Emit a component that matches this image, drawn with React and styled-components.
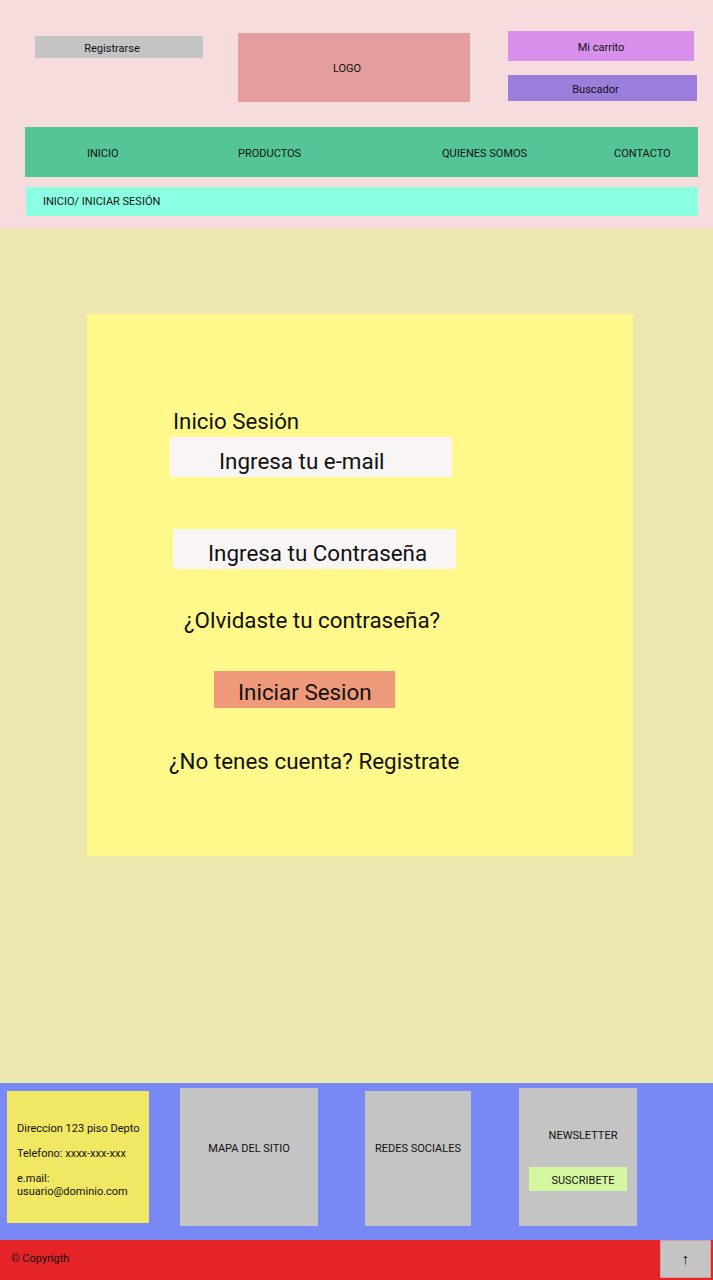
import React from "react";
import styled, { createGlobalStyle } from "styled-components";

const Global = createGlobalStyle`
  html, body { margin: 0; padding: 0; }
  body { font-family: Roboto, "Liberation Sans", sans-serif; color: #111; }
  * { box-sizing: border-box; }
`;

const Page = styled.div`
  width: 713px;
  display: flex;
  flex-direction: column;
`;

const Header = styled.header`
  background: #f7dcdd;
  padding: 31px 15px 13px 25px;
  display: flex;
  flex-direction: column;
`;

const TopRow = styled.div`
  display: flex;
  align-items: flex-start;
  height: 96px;
`;

const Block = styled.div`
  display: flex;
  align-items: center;
  justify-content: center;
  font-size: 11px;
  background: ${(p) => p.$bg};
  width: ${(p) => p.$w}px;
  height: ${(p) => p.$h}px;
  margin-left: ${(p) => p.$ml || 0}px;
  margin-top: ${(p) => p.$mt || 0}px;
  padding-right: ${(p) => p.$pr || 0}px;
  padding-top: 2px;
`;

const RightCol = styled.div`
  display: flex;
  flex-direction: column;
  margin-left: 38px;
  gap: 14px;
`;

const Nav = styled.nav`
  background: #53c597;
  width: 673px;
  height: 50px;
  display: grid;
  grid-template-columns: 151px 204px 172px 1fr;
  align-items: center;
  padding: 2px 0 0 62px;
  font-size: 11px;
`;

const Breadcrumb = styled.div`
  margin-top: 10px;
  margin-left: 1px;
  width: 672px;
  height: 29px;
  background: #8bffe2;
  display: flex;
  align-items: center;
  padding-left: 17px;
  font-size: 11px;
`;

const Main = styled.main`
  background: #ebe7ae;
  height: 854px;
  padding: 85px 0 0 87px;
`;

const Card = styled.section`
  width: 546px;
  height: 542px;
  background: #fef98a;
  display: flex;
  flex-direction: column;
  align-items: flex-start;
  padding-top: 94px;
`;

const Title = styled.h2`
  margin: 0 0 0 86px;
  font-size: 22.3px;
  font-weight: 400;
  line-height: 26px;
  height: 29px;
`;

const Input = styled.div`
  width: ${(p) => p.$w}px;
  height: 40px;
  margin-left: ${(p) => p.$ml}px;
  margin-top: ${(p) => p.$mt}px;
  background: #f9f5f5;
  display: flex;
  align-items: center;
  padding: 7px 0 0 ${(p) => p.$pl}px;
  font-size: 22.4px;
  white-space: nowrap;
`;

const TextLine = styled.p`
  margin: ${(p) => p.$mt}px 0 0 ${(p) => p.$ml}px;
  font-size: 22.4px;
  line-height: 26px;
  white-space: nowrap;
`;

const Button = styled.div`
  margin: ${(p) => p.$mt}px 0 0 127px;
  width: 181px;
  height: 37px;
  background: #ee9a7b;
  display: flex;
  align-items: center;
  padding: 4px 0 0 24px;
  font-size: 22.4px;
  white-space: nowrap;
`;

const Footer = styled.footer`
  background: #7889f6;
  height: 157px;
  display: flex;
  align-items: flex-start;
  padding-left: 7px;
`;

const Contact = styled.div`
  margin-top: 8px;
  width: 142px;
  height: 132px;
  background: #f0e862;
  padding: 31px 0 0 10px;
  font-size: 11px;
  line-height: 13px;
  display: flex;
  flex-direction: column;
  gap: 12px;
`;

const GrayBox = styled.div`
  background: #c4c4c4;
  width: ${(p) => p.$w}px;
  height: ${(p) => p.$h}px;
  margin-left: ${(p) => p.$ml}px;
  margin-top: ${(p) => p.$mt}px;
  padding-top: ${(p) => p.$pt}px;
  display: flex;
  flex-direction: column;
  align-items: center;
  font-size: 11px;
  line-height: 13px;
`;

const Subscribe = styled.div`
  margin-top: 25px;
  width: 98px;
  height: 24px;
  background: #d5f79f;
  display: flex;
  align-items: center;
  justify-content: center;
  padding: 2px 0 0 10px;
  font-size: 11px;
`;

const BottomBar = styled.div`
  background: #e52428;
  height: 40px;
  display: flex;
  align-items: flex-start;
  justify-content: space-between;
  padding-left: 11px;
  font-size: 11px;
`;

const Copy = styled.span`
  margin-top: 12px;
`;

const UpButton = styled.div`
  width: 51px;
  height: 38px;
  margin-right: 2px;
  background: #c4c4c4;
  border: 1px solid #c9a3a3;
  display: flex;
  align-items: center;
  justify-content: center;
  padding-bottom: 1px;
  font-size: 15px;
`;

export default function App() {
  return (
    <Page>
      <Global />
      <Header>
        <TopRow>
          <Block $bg="#c4c4c4" $w={168} $h={22} $ml={10} $mt={5} $pr={14}>Registrarse</Block>
          <Block $bg="#e39e9d" $w={232} $h={69} $ml={35} $mt={2} $pr={14}>LOGO</Block>
          <RightCol>
            <Block $bg="#d890ec" $w={186} $h={30}>Mi carrito</Block>
            <Block $bg="#9b7ddb" $w={189} $h={26} $pr={14}>Buscador</Block>
          </RightCol>
        </TopRow>
        <Nav>
          <span>INICIO</span>
          <span>PRODUCTOS</span>
          <span>QUIENES SOMOS</span>
          <span>CONTACTO</span>
        </Nav>
        <Breadcrumb>INICIO/ INICIAR SESIÓN</Breadcrumb>
      </Header>
      <Main>
        <Card>
          <Title>Inicio Sesión</Title>
          <Input $w={282} $ml={83} $mt={0} $pl={49}>Ingresa tu e-mail</Input>
          <Input $w={283} $ml={86} $mt={52} $pl={35}>Ingresa tu Contraseña</Input>
          <TextLine $mt={38} $ml={97}>¿Olvidaste tu contraseña?</TextLine>
          <Button $mt={38}>Iniciar Sesion</Button>
          <TextLine $mt={40} $ml={82}>¿No tenes cuenta? Registrate</TextLine>
        </Card>
      </Main>
      <Footer>
        <Contact>
          <span>Direccion 123 piso Depto</span>
          <span>Telefono: xxxx-xxx-xxx</span>
          <span>e.mail:<br />usuario@dominio.com</span>
        </Contact>
        <GrayBox $w={138} $h={138} $ml={31} $mt={5} $pt={54}>MAPA DEL SITIO</GrayBox>
        <GrayBox $w={106} $h={135} $ml={47} $mt={8} $pt={51}>REDES SOCIALES</GrayBox>
        <GrayBox $w={118} $h={138} $ml={48} $mt={5} $pt={41}>
          <span style={{ marginLeft: 10 }}>NEWSLETTER</span>
          <Subscribe>SUSCRIBETE</Subscribe>
        </GrayBox>
      </Footer>
      <BottomBar>
        <Copy>© Copyrigth</Copy>
        <UpButton>↑</UpButton>
      </BottomBar>
    </Page>
  );
}
